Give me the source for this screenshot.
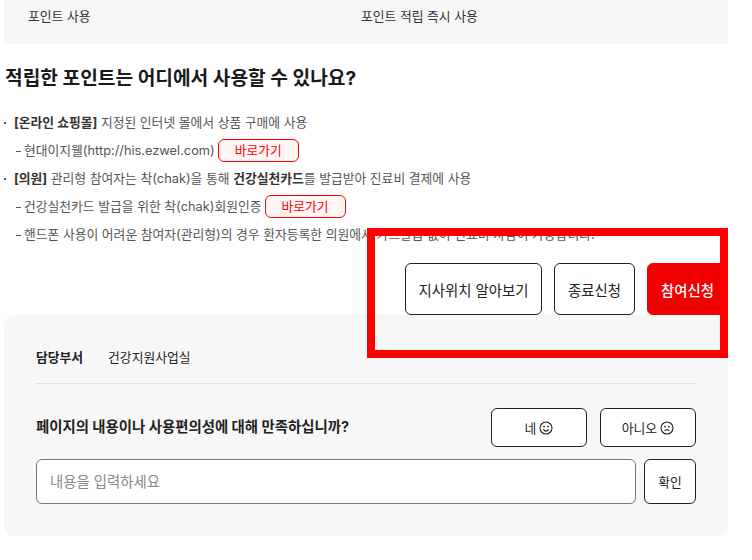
<div class="page">
	<div class="summary">
		<span class="cell">포인트 사용</span>
		<span class="cell">포인트 적립 즉시 사용</span>
	</div>

	<h2>적립한 포인트는 어디에서 사용할 수 있나요?</h2>

	<ul class="usage">
		<li><b>[온라인 쇼핑몰]</b> 지정된 인터넷 몰에서 상품 구매에 사용</li>
		<li class="sub">현대이지웰(http://his.ezwel.com)<a class="go" href="#a">바로가기</a></li>
		<li><b>[의원]</b> 관리형 참여자는 착(chak)을 통해 <b>건강실천카드</b>를 발급받아 진료비 결제에 사용</li>
		<li class="sub">건강실천카드 발급을 위한 착(chak)회원인증<a class="go" href="#b">바로가기</a></li>
		<li class="sub">핸드폰 사용이 어려운 참여자(관리형)의 경우 환자등록한 의원에서 카드발급 없이 진료비 차감이 가능합니다.</li>
	</ul>

	<section class="panel">
		<div class="dept">
			<strong>담당부서</strong>
			<span>건강지원사업실</span>
		</div>
		<div class="survey">
			<strong>페이지의 내용이나 사용편의성에 대해 만족하십니까?</strong>
			<div class="answers">
				<button class="answer">
					네
					<svg viewBox="0 0 14 14" width="14" height="14" fill="none" stroke="#222" stroke-width="1.1">
						<circle cx="7" cy="7" r="6" />
						<circle cx="5" cy="5.6" r=".9" fill="#222" stroke="none" />
						<circle cx="9" cy="5.6" r=".9" fill="#222" stroke="none" />
						<path d="M4.4 8.4c.7 1.2 1.5 1.7 2.6 1.7s1.9-.5 2.6-1.7" />
					</svg>
				</button>
				<button class="answer">
					아니오
					<svg viewBox="0 0 14 14" width="14" height="14" fill="none" stroke="#222" stroke-width="1.1">
						<circle cx="7" cy="7" r="6" />
						<circle cx="5" cy="5.6" r=".9" fill="#222" stroke="none" />
						<circle cx="9" cy="5.6" r=".9" fill="#222" stroke="none" />
						<path d="M4.6 10c.6-1 1.4-1.4 2.4-1.4s1.8.4 2.4 1.4" />
					</svg>
				</button>
			</div>
		</div>
		<div class="comment">
			<input type="text" placeholder="내용을 입력하세요" />
			<button class="confirm">확인</button>
		</div>
	</section>

	<div class="floating">
		<button class="action locate">지사위치 알아보기</button>
		<button class="action quit">종료신청</button>
		<button class="action primary">참여신청</button>
	</div>
</div>

<style>
	:global(body) {
		margin: 0;
		background: #fff;
	}

	.page {
		position: relative;
		width: 724px;
		height: 560px;
		margin-left: 4px;
		overflow: hidden;
		font-family: Inter, "Noto Sans CJK KR", sans-serif;
		font-size: 12.8px;
		color: #222;
	}

	.summary {
		display: grid;
		grid-template-columns: 333px 1fr;
		height: 44px;
		padding: 8px 24px 0;
		box-sizing: border-box;
		background: #f6f6f6;
		line-height: 18px;
		color: #333;
	}

	h2 {
		margin: 22px 0 0 1px;
		font-size: 19.2px;
		line-height: 24px;
		font-weight: 700;
		color: #1a1a1a;
	}

	.usage {
		list-style: none;
		margin: 19px 0 0;
		padding: 0;
		color: #555;
		line-height: 28px;
	}

	.usage li {
		position: relative;
		height: 28px;
		padding-left: 10px;
		white-space: nowrap;
	}

	.usage b {
		color: #333;
	}

	.usage li::before {
		content: "";
		position: absolute;
		left: 0;
		top: 13px;
		width: 2px;
		height: 2px;
		background: #555;
	}

	.usage li.sub {
		padding-left: 20px;
	}

	.usage li.sub::before {
		left: 12px;
		top: 14px;
		width: 5px;
		height: 1px;
	}

	.go {
		display: inline-block;
		box-sizing: border-box;
		width: 81px;
		height: 23px;
		margin-left: 3px;
		vertical-align: middle;
		border: 1px solid #f00;
		border-radius: 6px;
		background: #fff5f5;
		color: #f00;
		line-height: 21px;
		text-align: center;
		text-decoration: none;
		position: relative;
		top: -1px;
	}

	.panel {
		margin-top: 66px;
		height: 221px;
		padding: 27px 32px 0;
		box-sizing: border-box;
		background: #f7f7f7;
		border-radius: 10px;
	}

	.dept {
		display: flex;
		gap: 25px;
		height: 41px;
		line-height: 31px;
		border-bottom: 1px solid #e2e2e2;
		align-items: flex-start;
	}

	.dept strong {
		font-weight: 700;
	}

	.survey {
		display: flex;
		justify-content: space-between;
		align-items: center;
		margin-top: 24px;
	}

	.survey strong {
		font-size: 14.4px;
		font-weight: 700;
		margin-top: -4px;
	}

	.answers {
		display: flex;
		gap: 13px;
	}

	button {
		font: inherit;
		color: #222;
		background: #fff;
		cursor: pointer;
	}

	.answer {
		display: flex;
		align-items: center;
		justify-content: center;
		gap: 3px;
		width: 96px;
		height: 39px;
		padding: 0;
		border: 1px solid #222;
		border-radius: 6px;
	}

	.comment {
		display: flex;
		gap: 8px;
		margin-top: 12px;
	}

	.comment input {
		flex: 1;
		min-width: 0;
		height: 45px;
		box-sizing: border-box;
		padding: 0 13px;
		border: 1px solid #777;
		border-radius: 6px;
		background: #fff;
		font: inherit;
		font-size: 14.4px;
	}

	.comment input::placeholder {
		color: #888;
	}

	.confirm {
		width: 52px;
		height: 45px;
		padding: 0;
		border: 1px solid #222;
		border-radius: 6px;
	}

	/* fixed action bar, outlined in red, lies over the page */
	.floating {
		position: absolute;
		left: 363px;
		top: 228px;
		width: 361px;
		height: 130px;
		box-sizing: border-box;
		border: 8px solid #f00;
		display: flex;
		gap: 12px;
		padding: 27px 0 0 30px;
		overflow: hidden;
	}

	.action {
		flex: none;
		height: 52px;
		padding: 0;
		border: 1px solid #222;
		border-radius: 6px;
		font-size: 14.4px;
		white-space: nowrap;
	}

	.locate {
		width: 137px;
	}

	.quit {
		width: 81px;
	}

	.primary {
		width: 81px;
		border-color: #f00000;
		background: #f00000;
		color: #fff;
		font-weight: 500;
	}
</style>
